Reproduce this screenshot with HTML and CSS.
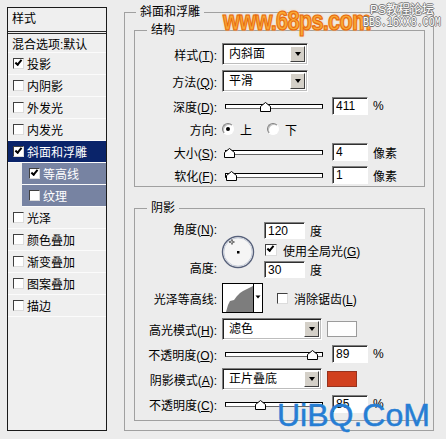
FILE: index.html
```html
<!DOCTYPE html>
<html>
<head>
    <meta charset="utf-8" />
    <meta name="viewport" content="width=device-width, initial-scale=1.0">
    <title>图层样式</title>
    <link rel="stylesheet" href="styles.css">
</head>
<body>

    <div class="dialog">
        <div class="style-list">
            <div class="list-head">样式</div>
            <div class="list-item blend">混合选项:默认</div>
            <div class="list-item"><span class="cb on"></span>投影</div>
            <div class="list-item"><span class="cb"></span>内阴影</div>
            <div class="list-item"><span class="cb"></span>外发光</div>
            <div class="list-item"><span class="cb"></span>内发光</div>
            <div class="list-item selected"><span class="cb on"></span>斜面和浮雕</div>
            <div class="list-item sub"><span class="cb on"></span>等高线</div>
            <div class="list-item sub"><span class="cb"></span>纹理</div>
            <div class="list-item"><span class="cb"></span>光泽</div>
            <div class="list-item"><span class="cb"></span>颜色叠加</div>
            <div class="list-item"><span class="cb"></span>渐变叠加</div>
            <div class="list-item"><span class="cb"></span>图案叠加</div>
            <div class="list-item"><span class="cb"></span>描边</div>
        </div>

        <fieldset class="group outer">
            <legend>斜面和浮雕</legend>

            <!-- 结构 -->
            <fieldset class="group inner structure">
                <legend>结构</legend>
                <div class="row select-row">
                    <span class="lbl">样式(<u>T</u>):</span>
                    <div class="select"><span class="select-text">内斜面</span><span class="select-btn"></span></div>
                </div>
                <div class="row select-row">
                    <span class="lbl">方法(<u>Q</u>):</span>
                    <div class="select"><span class="select-text">平滑</span><span class="select-btn"></span></div>
                </div>
                <div class="row">
                    <span class="lbl">深度(<u>D</u>):</span>
                    <div class="slider"><span class="track"></span><svg class="thumb" style="left: 35px" width="11" height="10" viewBox="0 0 11 10"><path d="M0.5 9.5V4.5L5.5 0.5L10.5 4.5V9.5Z" fill="#fff" stroke="#000"/></svg></div>
                    <input class="num" type="text" value="411">
                    <span class="unit">%</span>
                </div>
                <div class="row">
                    <span class="lbl">方向:</span>
                    <span class="radio on"></span><span class="radio-text">上</span>
                    <span class="radio"></span><span class="radio-text">下</span>
                </div>
                <div class="row">
                    <span class="lbl">大小(<u>S</u>):</span>
                    <div class="slider"><span class="track"></span><svg class="thumb" style="left: -1px" width="11" height="10" viewBox="0 0 11 10"><path d="M0.5 9.5V4.5L5.5 0.5L10.5 4.5V9.5Z" fill="#fff" stroke="#000"/></svg></div>
                    <input class="num" type="text" value="4">
                    <span class="unit">像素</span>
                </div>
                <div class="row">
                    <span class="lbl">软化(<u>F</u>):</span>
                    <div class="slider"><span class="track"></span><svg class="thumb" style="left: 1px" width="11" height="10" viewBox="0 0 11 10"><path d="M0.5 9.5V4.5L5.5 0.5L10.5 4.5V9.5Z" fill="#fff" stroke="#000"/></svg></div>
                    <input class="num" type="text" value="1">
                    <span class="unit">像素</span>
                </div>
            </fieldset>

            <!-- 阴影 -->
            <fieldset class="group inner shading">
                <legend>阴影</legend>
                <div class="angle-block">
                    <div class="angle-labels">
                        <span class="lbl">角度(<u>N</u>):</span>
                        <span class="lbl">高度:</span>
                    </div>
                    <svg class="dial" width="34" height="34" viewBox="0 0 34 34">
                        <circle cx="17" cy="17" r="15.5" fill="#f5f5f5" stroke="#56607a" stroke-width="1.4"/>
                        <circle cx="17" cy="17" r="14.2" fill="none" stroke="#c6ccd8"/>
                        <rect x="16" y="16" width="2.5" height="2.5" fill="#000"/>
                        <path d="M11 4.5v2M11 7.5v2M8 7h2M11.5 7h2" stroke="#000" stroke-width="1"/>
                    </svg>
                    <div class="angle-fields">
                        <div class="angle-row"><input class="num wide" type="text" value="120"><span class="unit">度</span></div>
                        <div class="angle-row"><span class="cb big on"></span><span class="check-text">使用全局光(<u>G</u>)</span></div>
                        <div class="angle-row"><input class="num wide" type="text" value="30"><span class="unit">度</span></div>
                    </div>
                </div>
                <div class="row contour-row">
                    <span class="lbl">光泽等高线:</span>
                    <svg class="contour" width="41" height="30" viewBox="0 0 41 30">
                        <rect x="0.5" y="0.5" width="40" height="29" fill="#fff" stroke="#000"/>
                        <path d="M4 29L6 22L8 18L12 17L15 13L18 10L21 8L25 6L31 3V29Z" fill="#7d7d7d"/>
                        <path d="M31.5 0V30" stroke="#000"/>
                        <path d="M33.5 12.5h5l-2.5 3z" fill="#000"/>
                    </svg>
                    <span class="cb anti"></span><span class="check-text">消除锯齿(<u>L</u>)</span>
                </div>
                <div class="row select-row">
                    <span class="lbl">高光模式(<u>H</u>):</span>
                    <div class="select long"><span class="select-text">滤色</span><span class="select-btn"></span></div>
                    <span class="swatch white"></span>
                </div>
                <div class="row">
                    <span class="lbl">不透明度(<u>O</u>):</span>
                    <div class="slider"><span class="track"></span><svg class="thumb" style="left: 82px" width="11" height="10" viewBox="0 0 11 10"><path d="M0.5 9.5V4.5L5.5 0.5L10.5 4.5V9.5Z" fill="#fff" stroke="#000"/></svg></div>
                    <input class="num" type="text" value="89">
                    <span class="unit">%</span>
                </div>
                <div class="row select-row">
                    <span class="lbl">阴影模式(<u>A</u>):</span>
                    <div class="select long"><span class="select-text">正片叠底</span><span class="select-btn"></span></div>
                    <span class="swatch red"></span>
                </div>
                <div class="row">
                    <span class="lbl">不透明度(<u>C</u>):</span>
                    <div class="slider"><span class="track"></span><svg class="thumb" style="left: 30px" width="11" height="10" viewBox="0 0 11 10"><path d="M0.5 9.5V4.5L5.5 0.5L10.5 4.5V9.5Z" fill="#fff" stroke="#000"/></svg></div>
                    <input class="num" type="text" value="85">
                    <span class="unit">%</span>
                </div>
            </fieldset>
        </fieldset>
    </div>

    <!-- watermarks over the capture -->
    <div class="wm wm-68ps">www.68ps.com</div>
    <div class="wm wm-bbs"><span class="bbs-top">PS教程论坛</span><span class="bbs-bottom">BBS.16XX8.COM</span></div>
    <div class="wm wm-uibq">UiBQ.CoM</div>

</body>
</html>
```

FILE: styles.css
```css
html, body {
    --bg:     rgb(236, 236, 236);
    --list:   rgb(239, 239, 239);
    --line:   rgb(160, 160, 160);
    --navy:   rgb(10, 36, 106);
    --slate:  rgb(119, 131, 162);
    --button: rgb(212, 208, 200);

    font-family: "Liberation Sans", "Noto Sans CJK SC", sans-serif;
    font-size: 12px;
    color: #000;
    background-color: var(--bg);
    margin: 0;
    padding: 0;
}

u {
    text-decoration: underline;
    text-underline-offset: 1px;
}

.dialog {
    display: flex;
    align-items: flex-start;
    padding-left: 7px;
}

/* left list */
.style-list {
    width: 100px;
    height: 424px;
    box-sizing: border-box;
    margin-top: 7px;
    border: 1px solid #1a1a1a;
    background-color: var(--list);
}

.list-head {
    height: 23px;
    line-height: 23px;
    padding-left: 4px;
    border-bottom: 3px double #2a2a2a;
}

.list-item {
    display: flex;
    align-items: center;
    height: 21px;
    padding-left: 5px;
    border-bottom: 1px solid #fbfbfb;
}

.list-item.blend {
    height: 18px;
    padding-left: 4px;
}

.list-item.selected {
    background-color: var(--navy);
    color: #fff;
}

.list-item.sub {
    margin-left: 14px;
    padding-left: 7px;
    background-color: var(--slate);
    color: #fff;
}

.cb {
    display: inline-block;
    position: relative;
    flex: none;
    width: 11px;
    height: 11px;
    box-sizing: border-box;
    border: 1px solid;
    border-color: #404040 #dcdcdc #dcdcdc #404040;
    background-color: #fff;
    margin-right: 3px;
}

.cb.on::after {
    content: "";
    position: absolute;
    left: 1px;
    top: 1px;
    width: 5px;
    height: 2px;
    border-left: 2px solid #000;
    border-bottom: 2px solid #000;
    transform: rotate(-50deg);
}

.cb.big {
    width: 12px;
    height: 12px;
    margin-left: 1px;
    margin-right: 6px;
}

.cb.anti {
    margin-left: 14px;
    margin-right: 6px;
}

/* group boxes */
.group {
    border: 1px solid var(--line);
    margin: 0;
    padding: 0;
    min-width: 0;
}

.group legend {
    line-height: 16px;
    padding: 0 4px;
    margin-left: 11px;
}

.outer {
    width: 310px;
    box-sizing: border-box;
    margin: 4px 0 0 17px;
    padding: 2px 0 9px 0;
}

.inner {
    margin: 0 8px 0 9px;
}

.inner legend {
    margin-left: 12px;
}

.structure {
    display: flex;
    flex-direction: column;
    gap: 5px;
    padding: 5px 0 2px 0;
}

.shading {
    display: flex;
    flex-direction: column;
    gap: 5px;
    margin-top: 13px;
    padding: 6px 0 7px 0;
}

.row {
    display: flex;
    align-items: center;
    height: 18px;
}

.row.select-row {
    height: 22px;
}

.lbl {
    display: inline-block;
    width: 82px;
    margin-right: 5px;
    text-align: right;
    white-space: nowrap;
}

/* dropdowns */
.select {
    display: flex;
    width: 86px;
    height: 22px;
    box-sizing: border-box;
    border: 1px solid;
    border-color: #808080 #fff #fff #808080;
    box-shadow: inset 1px 1px 0 #202020, inset -1px -1px 0 #bdbdbd;
    background-color: #fff;
    padding: 2px 2px 2px 0;
}

.select.long {
    width: 100px;
}

.select-text {
    flex: 1;
    padding-left: 6px;
    line-height: 16px;
}

.select-btn {
    display: flex;
    align-items: center;
    justify-content: center;
    width: 15px;
    box-sizing: border-box;
    background-color: var(--button);
    border: 1px solid;
    border-color: #fff #404040 #404040 #fff;
}

.select-btn::after {
    content: "";
    border-top: 4px solid #000;
    border-left: 3.5px solid transparent;
    border-right: 3.5px solid transparent;
}

/* sliders */
.slider {
    position: relative;
    display: flex;
    align-items: center;
    width: 98px;
    height: 10px;
    margin-left: 3px;
}

.track {
    display: block;
    width: 100%;
    height: 5px;
    box-sizing: border-box;
    border: 1px solid #000;
    border-bottom-color: #666;
    background-color: #fff;
}

.thumb {
    position: absolute;
    top: 1px;
}

.num {
    width: 36px;
    height: 18px;
    box-sizing: border-box;
    margin: 0 0 0 9px;
    padding: 0 0 0 3px;
    border: 1px solid;
    border-color: #808080 #fff #fff #808080;
    box-shadow: inset 1px 1px 0 #303030;
    background-color: #fff;
    font-family: "Liberation Sans", sans-serif;
    font-size: 12px;
    color: #000;
    outline: none;
}

.num.wide {
    width: 41px;
    height: 17px;
    margin-left: 0;
}

.unit {
    margin-left: 5px;
}

/* radios */
.radio {
    display: inline-block;
    position: relative;
    width: 12px;
    height: 12px;
    box-sizing: border-box;
    border: 1px solid;
    border-color: #808080 #fff #fff #808080;
    border-radius: 50%;
    background-color: #fff;
    box-shadow: inset 1px 1px 0 #c0c0c0;
}

.radio.on::after {
    content: "";
    position: absolute;
    left: 3px;
    top: 3px;
    width: 4px;
    height: 4px;
    border-radius: 50%;
    background-color: #000;
}

.radio-text {
    margin-left: 6px;
    margin-right: 15px;
}

/* angle + altitude */
.angle-block {
    display: flex;
    height: 56px;
}

.angle-labels {
    display: flex;
    flex-direction: column;
    justify-content: space-between;
}

.angle-labels .lbl {
    line-height: 17px;
}

.dial {
    margin: 13px 0 0 -1px;
}

.angle-fields {
    display: flex;
    flex-direction: column;
    justify-content: space-between;
    margin-left: 9px;
}

.angle-row {
    display: flex;
    align-items: center;
    height: 17px;
}

.contour-row {
    height: 30px;
}

.contour {
    flex: none;
}

/* colour chips */
.swatch {
    display: inline-block;
    width: 30px;
    height: 16px;
    box-sizing: border-box;
    margin-left: 5px;
}

.swatch.white {
    background-color: #fdfdfd;
    border: 1px solid #9a9a9a;
}

.swatch.red {
    background-color: rgb(209, 64, 30);
    border: 1px solid rgb(150, 50, 30);
}

/* watermarks */
.wm {
    position: absolute;
    white-space: nowrap;
    pointer-events: none;
}

.wm-68ps {
    left: 223px;
    top: 7px;
    font-family: "Liberation Sans", sans-serif;
    font-weight: bold;
    font-size: 28px;
    line-height: 28px;
    letter-spacing: -1px;
    color: rgb(248, 168, 52);
    -webkit-text-stroke: 1.2px rgb(232, 106, 14);
    text-shadow: 0 0 2px rgb(250, 200, 140), 0 0 3px rgb(250, 200, 140);
    transform: scaleX(0.78);
    transform-origin: left top;
}

.wm-bbs {
    left: 362px;
    top: 3px;
    display: flex;
    flex-direction: column;
    align-items: flex-end;
    width: 79px;
    color: #fff;
    text-shadow: 1px 0 0 #7a7a7a, -1px 0 0 #7a7a7a, 0 1px 0 #7a7a7a, 0 -1px 0 #7a7a7a;
}

.bbs-top {
    font-family: "Liberation Sans", "Noto Sans CJK SC", sans-serif;
    font-size: 12px;
    line-height: 14px;
    margin-right: 7px;
}

.bbs-bottom {
    font-family: "Liberation Mono", monospace;
    font-size: 12px;
    line-height: 13px;
    transform: scaleX(0.83);
    transform-origin: right top;
}

.wm-uibq {
    left: 277px;
    top: 399px;
    font-family: "Liberation Sans", sans-serif;
    font-size: 32px;
    line-height: 32px;
    color: rgb(38, 126, 212);
    -webkit-text-stroke: 0.5px rgb(38, 126, 212);
}
```
